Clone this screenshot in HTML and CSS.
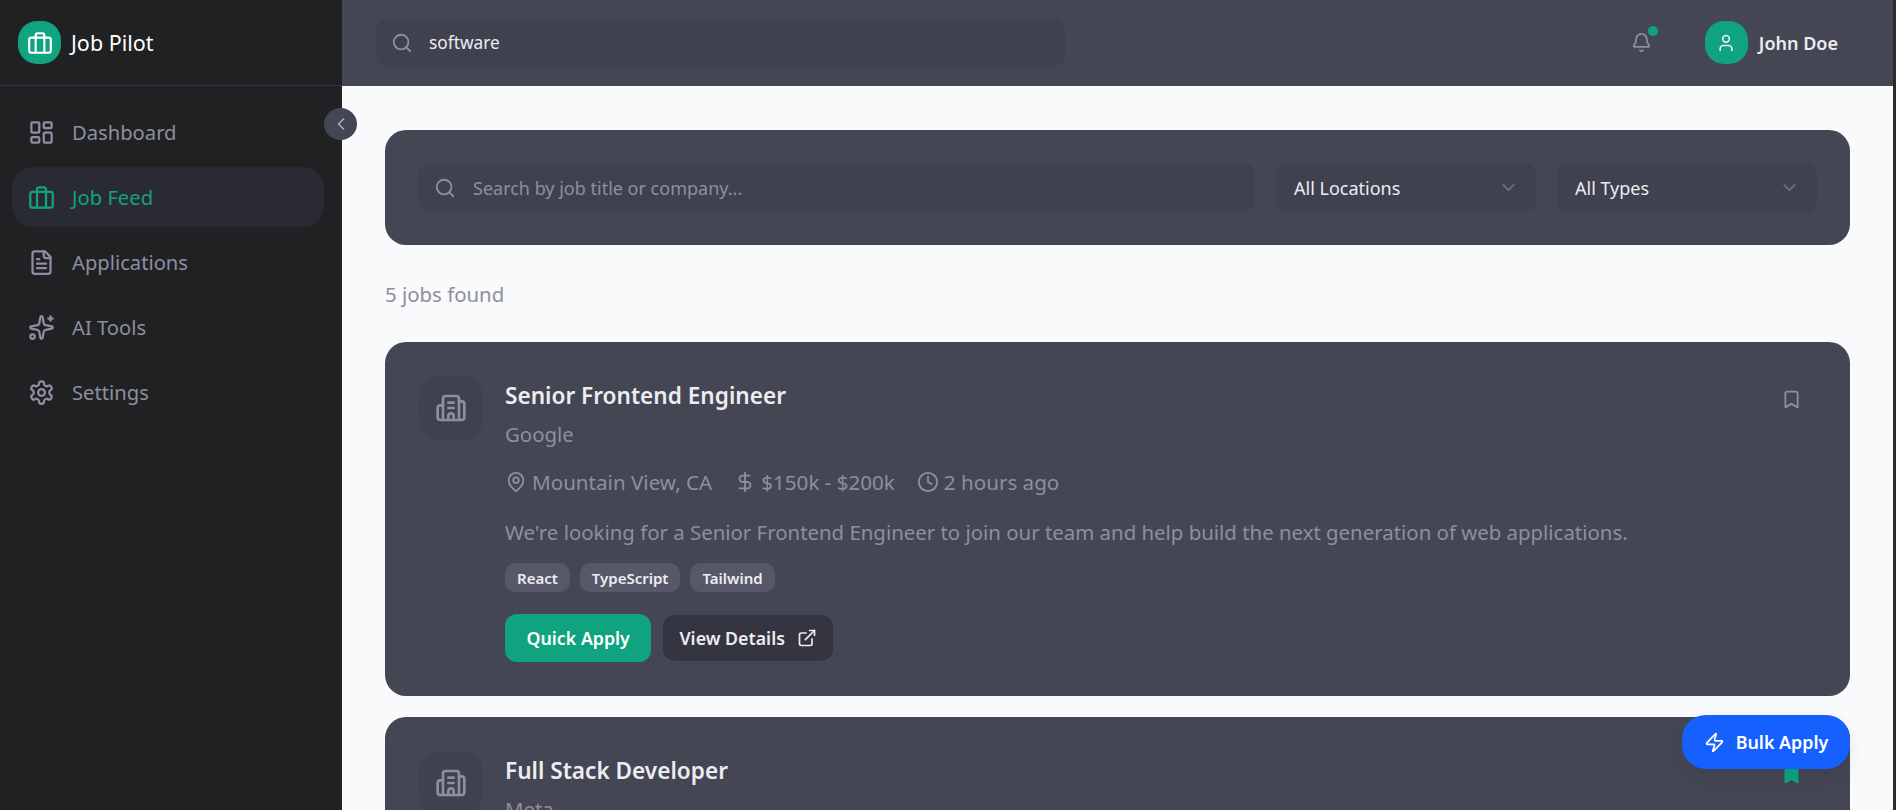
FILE: index.html
```html
<!DOCTYPE html>
<html lang="en">
<head>
<meta charset="utf-8">
<title>Job Pilot</title>
<link rel="stylesheet" href="styles.css">
</head>
<body>
<div class="app">
  <aside class="sidebar">
    <div class="brand">
      <span class="brand-mark"><svg class="ic i26" viewBox="0 0 24 24"><rect x="2" y="7" width="20" height="14" rx="2"/><path d="M16 21V5a2 2 0 0 0-2-2h-4a2 2 0 0 0-2 2v16"/></svg></span>
      <span class="brand-name">Job Pilot</span>
    </div>
    <button class="collapse"><svg class="ic i20" viewBox="0 0 24 24"><path d="m15 18-6-6 6-6"/></svg></button>
    <nav class="nav">
      <a class="nav-item"><svg class="ic i27" viewBox="0 0 24 24"><rect x="3" y="3" width="7" height="9" rx="1"/><rect x="14" y="3" width="7" height="5" rx="1"/><rect x="14" y="12" width="7" height="9" rx="1"/><rect x="3" y="16" width="7" height="5" rx="1"/></svg>Dashboard</a>
      <a class="nav-item active"><svg class="ic i27" viewBox="0 0 24 24"><rect x="2" y="7" width="20" height="14" rx="2"/><path d="M16 21V5a2 2 0 0 0-2-2h-4a2 2 0 0 0-2 2v16"/></svg>Job Feed</a>
      <a class="nav-item"><svg class="ic i27" viewBox="0 0 24 24"><path d="M15 2H6a2 2 0 0 0-2 2v16a2 2 0 0 0 2 2h12a2 2 0 0 0 2-2V7Z"/><path d="M14 2v4a2 2 0 0 0 2 2h4"/><path d="M10 9H8"/><path d="M16 13H8"/><path d="M16 17H8"/></svg>Applications</a>
      <a class="nav-item"><svg class="ic i27" viewBox="0 0 24 24"><path d="M11.017 2.814a1 1 0 0 1 1.966 0l1.051 5.558a2 2 0 0 0 1.594 1.594l5.558 1.051a1 1 0 0 1 0 1.966l-5.558 1.051a2 2 0 0 0-1.594 1.594l-1.051 5.558a1 1 0 0 1-1.966 0l-1.051-5.558a2 2 0 0 0-1.594-1.594l-5.558-1.051a1 1 0 0 1 0-1.966l5.558-1.051a2 2 0 0 0 1.594-1.594z"/><path d="M20 2v4"/><path d="M22 4h-4"/><circle cx="4" cy="20" r="2"/></svg>AI Tools</a>
      <a class="nav-item"><svg class="ic i27" viewBox="0 0 24 24"><path d="M12.22 2h-.44a2 2 0 0 0-2 2v.18a2 2 0 0 1-1 1.73l-.43.25a2 2 0 0 1-2 0l-.15-.08a2 2 0 0 0-2.73.73l-.22.38a2 2 0 0 0 .73 2.73l.15.1a2 2 0 0 1 1 1.72v.51a2 2 0 0 1-1 1.74l-.15.09a2 2 0 0 0-.73 2.73l.22.38a2 2 0 0 0 2.73.73l.15-.08a2 2 0 0 1 2 0l.43.25a2 2 0 0 1 1 1.73V20a2 2 0 0 0 2 2h.44a2 2 0 0 0 2-2v-.18a2 2 0 0 1 1-1.73l.43-.25a2 2 0 0 1 2 0l.15.08a2 2 0 0 0 2.73-.73l.22-.39a2 2 0 0 0-.73-2.73l-.15-.08a2 2 0 0 1-1-1.74v-.5a2 2 0 0 1 1-1.74l.15-.09a2 2 0 0 0 .73-2.73l-.22-.38a2 2 0 0 0-2.73-.73l-.15.08a2 2 0 0 1-2 0l-.43-.25a2 2 0 0 1-1-1.73V4a2 2 0 0 0-2-2z"/><circle cx="12" cy="12" r="3"/></svg>Settings</a>
    </nav>
  </aside>
  <div class="column">
    <header class="topbar">
      <div class="top-search">
        <svg class="ic i22" viewBox="0 0 24 24"><circle cx="11" cy="11" r="8"/><path d="m21 21-4.3-4.3"/></svg>
        <span>software</span>
      </div>
      <div class="top-right">
        <span class="bell"><svg class="ic i21" viewBox="0 0 24 24"><path d="M10.268 21a2 2 0 0 0 3.464 0"/><path d="M3.262 15.326A1 1 0 0 0 4 17h16a1 1 0 0 0 .74-1.673C19.41 13.956 18 12.499 18 8A6 6 0 0 0 6 8c0 4.499-1.411 5.956-2.738 7.326"/></svg><i class="dot"></i></span>
        <div class="user">
          <span class="avatar"><svg class="ic i20" viewBox="0 0 24 24"><path d="M19 21v-2a4 4 0 0 0-4-4H9a4 4 0 0 0-4 4v2"/><circle cx="12" cy="7" r="4"/></svg></span>
          <span class="user-name">John Doe</span>
        </div>
      </div>
    </header>
    <main class="main">
      <section class="filters">
        <div class="field grow">
          <svg class="ic i22" viewBox="0 0 24 24"><circle cx="11" cy="11" r="8"/><path d="m21 21-4.3-4.3"/></svg>
          <span class="placeholder">Search by job title or company...</span>
        </div>
        <div class="field select"><span>All Locations</span><svg class="ic i21" viewBox="0 0 24 24"><path d="m6 9 6 6 6-6"/></svg></div>
        <div class="field select"><span>All Types</span><svg class="ic i21" viewBox="0 0 24 24"><path d="m6 9 6 6 6-6"/></svg></div>
      </section>
      <p class="count">5 jobs found</p>
      <article class="card">
        <div class="logo"><svg class="ic i32" viewBox="0 0 24 24"><path d="M10 12h4"/><path d="M10 8h4"/><path d="M14 21v-3a2 2 0 0 0-4 0v3"/><path d="M6 10H4a2 2 0 0 0-2 2v7a2 2 0 0 0 2 2h16a2 2 0 0 0 2-2V9a2 2 0 0 0-2-2h-2"/><path d="M6 21V5a2 2 0 0 1 2-2h8a2 2 0 0 1 2 2v16"/></svg></div>
        <div class="body">
          <h2 class="title">Senior Frontend Engineer</h2>
          <p class="company">Google</p>
          <div class="meta">
            <span><svg class="ic i22" viewBox="0 0 24 24"><path d="M20 10c0 6-8 12-8 12s-8-6-8-12a8 8 0 0 1 16 0Z"/><circle cx="12" cy="10" r="3"/></svg>Mountain View, CA</span>
            <span><svg class="ic i22" viewBox="0 0 24 24"><path d="M12 2v20"/><path d="M17 5H9.5a3.5 3.5 0 0 0 0 7h5a3.5 3.5 0 0 1 0 7H6"/></svg>$150k - $200k</span>
            <span><svg class="ic i22" viewBox="0 0 24 24"><circle cx="12" cy="12" r="10"/><path d="M12 6v6l4 2"/></svg>2 hours ago</span>
          </div>
          <p class="desc">We're looking for a Senior Frontend Engineer to join our team and help build the next generation of web applications.</p>
          <div class="tags"><span class="tag">React</span><span class="tag">TypeScript</span><span class="tag">Tailwind</span></div>
          <div class="actions">
            <button class="btn primary">Quick Apply</button>
            <button class="btn secondary">View Details<svg class="ic i20" viewBox="0 0 24 24"><path d="M15 3h6v6"/><path d="M10 14 21 3"/><path d="M18 13v6a2 2 0 0 1-2 2H5a2 2 0 0 1-2-2V8a2 2 0 0 1 2-2h6"/></svg></button>
          </div>
        </div>
        <svg class="ic i21 mark" viewBox="0 0 24 24"><path d="m19 21-7-4-7 4V5a2 2 0 0 1 2-2h10a2 2 0 0 1 2 2v16z"/></svg>
      </article>
      <article class="card">
        <div class="logo"><svg class="ic i32" viewBox="0 0 24 24"><path d="M10 12h4"/><path d="M10 8h4"/><path d="M14 21v-3a2 2 0 0 0-4 0v3"/><path d="M6 10H4a2 2 0 0 0-2 2v7a2 2 0 0 0 2 2h16a2 2 0 0 0 2-2V9a2 2 0 0 0-2-2h-2"/><path d="M6 21V5a2 2 0 0 1 2-2h8a2 2 0 0 1 2 2v16"/></svg></div>
        <div class="body">
          <h2 class="title">Full Stack Developer</h2>
          <p class="company">Meta</p>
        </div>
        <svg class="ic i21 mark saved" viewBox="0 0 24 24"><path d="m19 21-7-4-7 4V5a2 2 0 0 1 2-2h10a2 2 0 0 1 2 2v16z"/></svg>
      </article>
    </main>
    <button class="bulk"><svg class="ic i21" viewBox="0 0 24 24"><path d="M4 14a1 1 0 0 1-.78-1.63l9.9-10.2a.5.5 0 0 1 .86.46l-1.92 6.02A1 1 0 0 0 13 10h7a1 1 0 0 1 .78 1.63l-9.9 10.2a.5.5 0 0 1-.86-.46l1.92-6.02A1 1 0 0 0 11 14z"/></svg>Bulk Apply</button>
  </div>
</div>
</body>
</html>
```

FILE: styles.css
```css
* { box-sizing: border-box; }
html, body { margin: 0; height: 100%; overflow: hidden; }
body { font-family: "Noto Sans", "Open Sans", sans-serif; background: #2b2b2b; color: #ececf1; }
h2, p { margin: 0; }
button { font: inherit; border: 0; }
.ic { fill: none; stroke: currentColor; stroke-width: 2; stroke-linecap: round; stroke-linejoin: round; flex: none; display: block; }
.i20 { width: 20px; height: 20px; }
.i21 { width: 21px; height: 21px; }
.i22 { width: 22px; height: 22px; }
.i26 { width: 26px; height: 26px; }
.i27 { width: 27px; height: 27px; }
.i32 { width: 32px; height: 32px; }

.app { display: flex; height: 810px; width: 1893px; }
.sidebar { position: relative; width: 342px; flex: none; background: #202123; }
.brand { height: 86px; display: flex; align-items: center; gap: 10px; padding-left: 18px; border-bottom: 1px solid #343541; }
.brand-mark { width: 43px; height: 43px; border-radius: 19px; background: #10a37f; color: #fff; display: flex; align-items: center; justify-content: center; }
.brand-name { font-size: 21.5px; color: #fff; }
.collapse { position: absolute; top: 108px; left: 324px; width: 33px; height: 32px; padding: 0; border-radius: 50%; background: #444654; color: #a9a9b8; display: flex; align-items: center; justify-content: center; z-index: 2; }
.nav { padding: 16px 18px 17px 12px; display: flex; flex-direction: column; gap: 5px; }
.nav-item { height: 60px; border-radius: 21px; padding: 0 16px; display: flex; align-items: center; gap: 17px; font-size: 20.2px; color: #8e8ea0; }
.nav-item.active { background: #2a2b32; color: #10a37f; }

.column { position: relative; flex: 1; display: flex; flex-direction: column; min-width: 0; background: #f9fafb; }
.topbar { height: 86px; flex: none; background: #444654; display: flex; align-items: center; justify-content: space-between; padding: 0 55px 1px 34px; }
.top-search { width: 689px; height: 48px; border-radius: 12px; background: #40414f; color: #8e8ea0; display: flex; align-items: center; gap: 16px; padding: 0 15px; }
.top-search span { font-size: 17.3px; color: #ececf1; }
.top-right { display: flex; align-items: center; gap: 53px; }
.bell { position: relative; color: #8e8ea0; }
.dot { position: absolute; top: -6px; right: -6px; width: 10px; height: 10px; border-radius: 50%; background: #10a37f; }
.user { display: flex; align-items: center; gap: 11px; }
.avatar { width: 43px; height: 43px; border-radius: 19px; background: #10a37f; color: #ececf1; display: flex; align-items: center; justify-content: center; }
.user-name { font-size: 18px; font-weight: 600; }

.main { flex: 1; min-height: 0; overflow: hidden; padding: 44px 43px 0; display: flex; flex-direction: column; }
.filters { flex: none; height: 115px; background: #444654; border-radius: 21px; padding: 33px; display: flex; gap: 21px; }
.field { height: 49px; background: #40414f; border-radius: 12px; display: flex; align-items: center; font-size: 18px; }
.field.grow { flex: 1; gap: 17px; padding: 0 16px; color: #8e8ea0; }
.select { width: 260px; justify-content: space-between; padding: 0 17px 0 18px; }
.select svg { color: #6e6e80; }
.placeholder { color: #8e8ea0; }
.count { height: 97px; flex: none; display: flex; align-items: center; font-size: 20.4px; color: #8e8ea0; }
.card { flex: none; position: relative; display: flex; gap: 22px; background: #444654; border-radius: 21px; padding: 34px; margin-bottom: 21px; }
.logo { width: 64px; height: 64px; flex: none; border-radius: 21px; background: #40414f; color: #8e8ea0; display: flex; align-items: center; justify-content: center; }
.body { flex: 1; min-width: 0; padding-top: 4px; }
.title { font-size: 22.6px; font-weight: 600; line-height: 32px; }
.company { font-size: 20.4px; line-height: 28px; margin-top: 8px; color: #8e8ea0; }
.meta { display: flex; gap: 22px; margin-top: 20px; font-size: 20.6px; line-height: 28px; color: #8e8ea0; }
.meta span { display: flex; align-items: center; gap: 5px; }
.desc { margin-top: 22px; font-size: 20.4px; line-height: 28px; color: #8e8ea0; }
.tags { display: flex; gap: 10px; margin-top: 17px; }
.tag { height: 29px; padding: 0 12px; border-radius: 10px; background: #565869; font-size: 15px; font-weight: 600; display: flex; align-items: center; }
.actions { display: flex; align-items: center; gap: 12px; margin-top: 22px; }
.btn { display: flex; align-items: center; font-size: 17.8px; font-weight: 600; color: #ececf1; border-radius: 12px; }
.btn.primary { height: 48px; padding: 0 21.5px; background: #10a37f; color: #fff; }
.btn.secondary { height: 46px; padding: 0 16px; gap: 12px; background: #343541; }
.mark { position: absolute; top: 47px; right: 48px; color: #8e8ea0; }
.mark.saved { color: #10a37f; fill: #10a37f; }
.bulk { position: absolute; right: 43px; top: 715px; width: 168px; height: 54px; border-radius: 24px; background: #1660ff; color: #fff; font-size: 17.9px; font-weight: 600; display: flex; align-items: center; justify-content: center; gap: 11px; box-shadow: 0 8px 20px rgba(0,0,0,.08); }
```
